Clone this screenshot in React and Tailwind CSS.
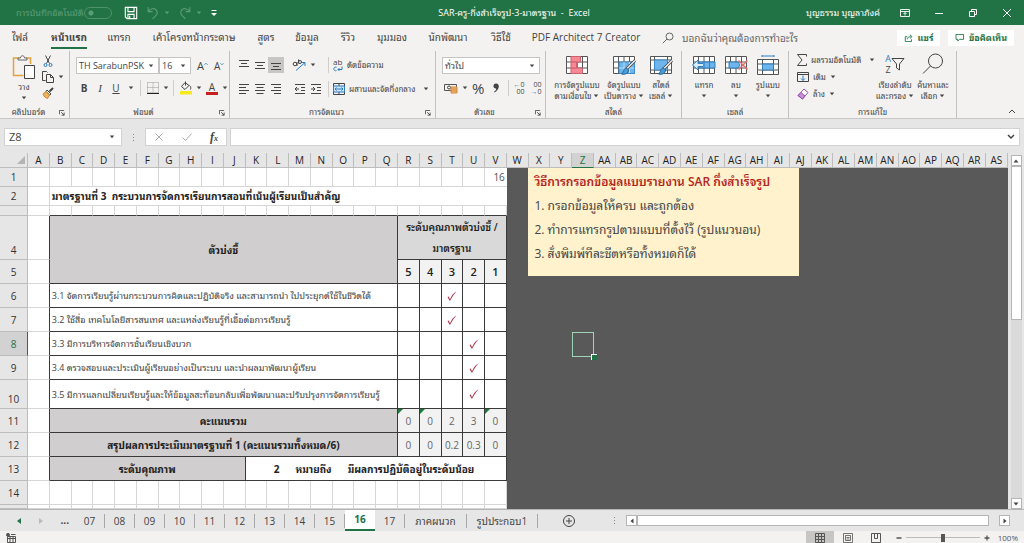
import React, { useState } from 'react';
import clsx from 'clsx';

const COLUMNS = [
  'A', 'B', 'C', 'D', 'E', 'F', 'G', 'H', 'I', 'J', 'K', 'L', 'M', 'N', 'O', 'P', 'Q', 'R', 'S', 'T', 'U', 'V', 'W',
  'X', 'Y', 'Z', 'AA', 'AB', 'AC', 'AD', 'AE', 'AF', 'AG', 'AH', 'AI', 'AJ', 'AK', 'AL', 'AM', 'AN', 'AO', 'AP',
  'AQ', 'AR', 'AS',
];

const MENU = [
  { label: 'ไฟล์', width: 'w-10' },
  { label: 'หน้าแรก', width: 'w-[58px]', active: true },
  { label: 'แทรก', width: 'w-[42px]' },
  { label: 'เค้าโครงหน้ากระดาษ', width: 'w-[108px]' },
  { label: 'สูตร', width: 'w-9' },
  { label: 'ข้อมูล', width: 'w-[46px]' },
  { label: 'รีวิว', width: 'w-9' },
  { label: 'มุมมอง', width: 'w-[52px]' },
  { label: 'นักพัฒนา', width: 'w-[60px]' },
  { label: 'วิธีใช้', width: 'w-[46px]' },
  { label: 'PDF Architect 7 Creator', width: 'w-[124px]' },
];

const INDICATORS = [
  { row: 6, text: '3.1 จัดการเรียนรู้ผ่านกระบวนการคิดและปฏิบัติจริง และสามารถนำ ไปประยุกต์ใช้ในชีวิตได้', score: 3 },
  { row: 7, text: '3.2 ใช้สื่อ เทคโนโลยีสารสนเทศ และแหล่งเรียนรู้ที่เอื้อต่อการเรียนรู้', score: 3 },
  { row: 8, text: '3.3 มีการบริหารจัดการชั้นเรียนเชิงบวก', score: 2 },
  { row: 9, text: '3.4 ตรวจสอบและประเมินผู้เรียนอย่างเป็นระบบ และนำผลมาพัฒนาผู้เรียน', score: 2 },
  { row: 10, text: '3.5 มีการแลกเปลี่ยนเรียนรู้และให้ข้อมูลสะท้อนกลับเพื่อพัฒนาและปรับปรุงการจัดการเรียนรู้', score: 2 },
];

const LEVELS = [5, 4, 3, 2, 1];

const SHEETS = ['07', '08', '09', '10', '11', '12', '13', '14', '15', '16', '17', 'ภาคผนวก', 'รูปประกอบ1'];

const Svg = ({ className, viewBox = '0 0 16 16', children }) => (
  <svg className={clsx('shrink-0', className)} viewBox={viewBox} fill="none" stroke="currentColor" aria-hidden="true">
    {children}
  </svg>
);

const Caret = ({ className }) => (
  <Svg className={clsx('h-1 w-1.5', className)} viewBox="0 0 6 4">
    <path d="M0.8 0.5h4.4L3 3.2z" fill="currentColor" stroke="none" />
  </Svg>
);

const Launcher = () => (
  <button type="button" aria-label="ตัวเลือกเพิ่มเติม" className="absolute right-1 bottom-0.5">
    <Svg className="h-1.5 w-1.5" viewBox="0 0 7 7">
      <path d="M0.5 5V0.5H6M2.5 2.5L6 6M6 3v3H3" />
    </Svg>
  </button>
);

const Group = ({ label, width, launcher, children }) => (
  <section className={clsx('relative flex shrink-0 flex-col border-r border-[#c3c1bf]', width)}>
    <div className="h-14">{children}</div>
    <div className={clsx('text-center text-[8px] leading-3', launcher && 'pr-3')}>{label}</div>
    {launcher && <Launcher />}
  </section>
);

// แถบชื่อเรื่อง
const TitleBar = () => (
  <header className="flex h-[25px] items-center bg-[#217346] text-white">
    <div className="flex flex-1 items-center pl-4">
      <label className="flex items-center gap-1 text-[9px] text-[#5c9c78]">
        <span className="w-16 whitespace-nowrap">การบันทึกอัตโนมัติ</span>
        <input
          type="checkbox"
          className="h-3 w-7 appearance-none rounded-full border border-[#4f926d] bg-[radial-gradient(circle_at_6px_5px,#5c9c78_2px,transparent_3px)]"
        />
      </label>
      <button type="button" aria-label="บันทึก" className="ml-3">
        <Svg className="h-3.5 w-3.5">
          <path d="M1.5 1.5h13v13h-11l-2-2zM4.5 1.5v5h7v-5M4.5 14.5v-5h7v5M6.5 11v3.5" strokeWidth="1.3" />
        </Svg>
      </button>
      <button type="button" aria-label="เลิกทำ" className="ml-2 flex items-center gap-1 text-[#5c9c78]">
        <Svg className="h-3.5 w-3.5">
          <path d="M2.5 1.5v5h5M2.5 6.5C5 2.5 10 2 12 5s1 5-4.5 9.5" strokeWidth="1.3" />
        </Svg>
        <Caret />
      </button>
      <button type="button" aria-label="ทำซ้ำ" className="ml-2 flex items-center gap-1 text-[#5c9c78]">
        <Svg className="h-3.5 w-3.5">
          <path d="M13.5 1.5v5h-5M13.5 6.5C11 2.5 6 2 4 5s-1 5 4.5 9.5" strokeWidth="1.3" />
        </Svg>
        <Caret />
      </button>
      <button type="button" aria-label="กำหนดแถบเครื่องมือเอง" className="ml-2">
        <Svg className="h-2 w-2" viewBox="0 0 8 8">
          <path d="M1.5 1.5h5" />
          <path d="M1 4h6L4 7z" fill="currentColor" stroke="none" />
        </Svg>
      </button>
    </div>
    <h1 className="text-[9px] whitespace-pre">SAR-ครู-กึ่งสำเร็จรูป-3-มาตรฐาน  -  Excel</h1>
    <div className="flex flex-1 items-center justify-end pr-3">
      <span className="mr-5 text-[9px]">บุญธรรม บุญลาภังค์</span>
      <button type="button" aria-label="ตัวเลือกการแสดง Ribbon" className="mr-6">
        <Svg className="h-2.5 w-2.5" viewBox="0 0 10 10">
          <path d="M0.5 1.5h9v7h-9zM0.5 3.5h9M5 7.5v-3M3.5 6L5 4.500 6.500 6" strokeWidth="0.9" />
        </Svg>
      </button>
      <button type="button" aria-label="ย่อหน้าต่าง" className="mr-6">
        <Svg className="h-2.5 w-2.5" viewBox="0 0 10 10"><path d="M1 5.5h8" /></Svg>
      </button>
      <button type="button" aria-label="คืนค่าหน้าต่าง" className="mr-6">
        <Svg className="h-2.5 w-2.5" viewBox="0 0 10 10">
          <path d="M1.5 3.5h5v5h-5zM3.5 3.5v-2h5v5h-2" />
        </Svg>
      </button>
      <button type="button" aria-label="ปิด">
        <Svg className="h-2.5 w-2.5" viewBox="0 0 10 10"><path d="M1 1l8 8M9 1L1 9" /></Svg>
      </button>
    </div>
  </header>
);

const MenuBar = () => (
  <nav className="flex h-[26px] items-center text-[10px]">
    {MENU.map((item) => (
      <button
        key={item.label}
        type="button"
        className={clsx('flex h-full shrink-0 items-center justify-center whitespace-nowrap', item.width, item.active && 'font-bold')}
      >
        <span className={clsx('flex h-[21px] items-center border-b-2', item.active ? 'border-[#217346]' : 'border-transparent')}>
          {item.label}
        </span>
      </button>
    ))}
    <button type="button" className="ml-3.5 flex items-center gap-2 whitespace-nowrap text-[#666]">
      <Svg className="h-3 w-3" viewBox="0 0 12 12">
        <circle cx="7.5" cy="4.5" r="3.5" />
        <path d="M5 7L0.8 11.2" />
      </Svg>
      บอกฉันว่าคุณต้องการทำอะไร
    </button>
    <div className="ml-auto flex gap-2 pr-2.5 text-[9px] font-bold text-[#217346]">
      <button type="button" className="flex h-4 w-[43px] items-center justify-center gap-1 bg-white whitespace-nowrap">
        <Svg className="h-2 w-2.5" viewBox="0 0 10 9">
          <path d="M3 3H0.8v5.500h7V6M3 6c0-2 1.500-3 4-3M6 0.800L8.500 3 6 5.200" />
        </Svg>
        แชร์
      </button>
      <button type="button" className="flex h-4 w-[66px] items-center justify-center gap-1 bg-white whitespace-nowrap">
        <Svg className="h-2 w-2.5" viewBox="0 0 10 9">
          <path d="M0.5 0.5h8.5v5.5H4.5L2.5 8V6h-2z" />
        </Svg>
        ข้อคิดเห็น
      </button>
    </div>
  </nav>
);

const Lines = ({ d, label, active }) => (
  <button type="button" aria-label={label} className={clsx('flex h-4 w-4 items-center justify-center', active && 'bg-[#c8c6c4]')}>
    <Svg className="h-3 w-3" viewBox="0 0 12 12"><path d={d} /></Svg>
  </button>
);

const BigButton = ({ icon, lines, className }) => (
  <button type="button" className={clsx('flex shrink-0 flex-col items-center whitespace-nowrap', className)}>
    {icon}
    <span className="mt-1 text-[8px] leading-[11px]">{lines[0]}</span>
    <span className="flex h-[11px] items-center gap-0.5 text-[8px] leading-[11px]">
      {lines[1]}
      <Caret />
    </span>
  </button>
);

const gridLines = 'M1.5 1.5h21v17h-21zM1.5 7h21M1.5 13h21M6.5 1.5v17M12 1.5v17M17.5 1.5v17';

const Brush = () => (
  <>
    <path d="M23 5.5l-8.500 8.500" stroke="#444" strokeWidth="3" />
    <path d="M23 5.5l-8.500 8.500" stroke="#eee" strokeWidth="1.5" />
    <path d="M14.5 13c-3 0-2.500 4-5 6 4 1 7-1 7-4z" fill="#4a9bd9" stroke="#27648f" />
  </>
);

const ConditionalIcon = () => (
  <Svg className="h-5 w-6" viewBox="0 0 24 20">
    <path d="M1.5 1.5h21v17h-21z" fill="#fff" stroke="none" />
    <path d={gridLines} stroke="#555" />
    <path d="M6 1.5h9.500V7H6zM6 13h11.500v5.500H6z" fill="#f58a96" stroke="#d0606c" />
    <path d="M6 7h5.500v6H6z" fill="#f58a96" stroke="#d0606c" />
    <path d="M12.5 8v4" stroke="#3c8ac8" />
  </Svg>
);

const FormatTableIcon = () => (
  <Svg className="h-5 w-6" viewBox="0 0 24 20">
    <path d="M1.5 1.5h21v17h-21z" fill="#fff" stroke="none" />
    <path d={gridLines} stroke="#555" />
    <path d="M7 7h15.500v11.500H7z" fill="#6db5ea" stroke="#3c8ac8" />
    <path d="M12 7v11M17.5 7v11M7 13h15" stroke="#b9dcf5" />
    <Brush />
  </Svg>
);

const CellStyleIcon = () => (
  <Svg className="h-5 w-6" viewBox="0 0 24 20">
    <path d="M1.5 1.5h21v17h-21z" fill="#fff" stroke="none" />
    <path d="M1.5 1.5h21v17h-21zM1.5 5h21M5.5 1.5v17M18.5 1.5v17M1.5 15h21" stroke="#555" />
    <path d="M5.5 5h13v10h-13z" fill="#6db5ea" stroke="#3c8ac8" />
    <Brush />
  </Svg>
);

const InsertIcon = () => (
  <Svg className="h-5 w-6" viewBox="0 0 24 20">
    <path d="M1.5 1.5h21v17h-21z" fill="#fff" stroke="none" />
    <path d={gridLines} stroke="#555" />
    <path d="M7 7h16v6H7z" fill="#6db5ea" stroke="#2f7fc0" />
    <path d="M12 7v6M17.5 7v6" stroke="#2f7fc0" />
    <path d="M11 8.5H6V5L0.5 10 6 15v-3.500h5" fill="#d8ecfa" stroke="#2f7fc0" />
  </Svg>
);

const DeleteIcon = () => (
  <Svg className="h-5 w-6" viewBox="0 0 24 20">
    <path d="M1.5 1.5h21v17h-21z" fill="#fff" stroke="none" />
    <path d={gridLines} stroke="#555" />
    <path d="M5 7h9l2 3-2 3H5z" fill="#6db5ea" stroke="#2f7fc0" />
    <path d="M14.5 5.5l9 9M23.5 5.5l-9 9" stroke="#e67070" strokeWidth="1.5" />
  </Svg>
);

const FormatIcon = () => (
  <Svg className="h-5 w-6" viewBox="0 0 24 20">
    <path d="M1.5 4.500h21v15h-21z" fill="#fff" stroke="none" />
    <path d="M1.5 4.5h21v15h-21zM1.5 9h21M1.5 15h21M6.5 4.5v15M17.5 4.5v15" stroke="#555" />
    <path d="M6.5 9h11v6h-11z" fill="#6db5ea" stroke="#2f7fc0" />
    <path d="M6 1h12M6 0v2M18 0v2" stroke="#2f7fc0" />
  </Svg>
);

const ClipboardGroup = () => (
  <Group label="คลิปบอร์ด" width="w-[70px]" launcher>
    <div className="flex gap-1.5 pt-1 pl-3">
      <button type="button" className="flex w-6 flex-col items-center text-[8px] leading-[11px]">
        <Svg className="h-6 w-6" viewBox="0 0 24 24">
          <path d="M7 3H1.5v17.5h10" stroke="#e3a23c" strokeWidth="1.5" />
          <path d="M14 3h4.5v6" stroke="#e3a23c" strokeWidth="1.5" />
          <path d="M6 5V3h2.5c0-3 4-3 4 0H15v2z" fill="#fff" stroke="#666" />
          <path d="M12.5 10.5h10v13h-10z" fill="#fff" stroke="#444" />
        </Svg>
        <span className="mt-0.5">วาง</span>
        <Caret className="mt-1" />
      </button>
      <div className="flex flex-col gap-1">
        <button type="button" aria-label="ตัด">
          <Svg className="h-3 w-3" viewBox="0 0 12 12">
            <path d="M3.5 0.5l4 8M8.5 0.5l-4 8" stroke="#444" />
            <circle cx="3.5" cy="10" r="1.5" stroke="#2b7cc0" />
            <circle cx="8.5" cy="10" r="1.5" stroke="#2b7cc0" />
          </Svg>
        </button>
        <button type="button" aria-label="คัดลอก" className="flex items-center gap-1">
          <Svg className="h-3 w-3" viewBox="0 0 12 12">
            <path d="M3.5 9.5h-3v-9h4l1 1" />
            <path d="M4.5 3.5h4l3 3v5h-7zM8.5 3.5v3h3" />
          </Svg>
          <Caret />
        </button>
        <button type="button" aria-label="ตัวคัดวางรูปแบบ">
          <Svg className="h-3 w-3" viewBox="0 0 12 12">
            <path d="M11 1L7.5 4.5" strokeWidth="2" />
            <path d="M5 3l4 4-1.5 1L4 4.5z" fill="#fff" />
            <path d="M4 4.5L1 7c1 3 3 4 4.5 4.5l2-3.5z" fill="#efb45e" stroke="#c98a2c" />
          </Svg>
        </button>
      </div>
    </div>
  </Group>
);

const Select = ({ label, value, className }) => (
  <label className={clsx('relative flex h-[17px] items-center border border-[#c6c4c2] bg-white', className)}>
    <select aria-label={label} defaultValue={value} className="w-full appearance-none bg-transparent pl-0.5 text-[9px] leading-[15px] outline-none">
      <option>{value}</option>
    </select>
    <Caret className="pointer-events-none absolute right-1" />
  </label>
);

const FontGroup = () => (
  <Group label="ฟอนต์" width="w-40" launcher>
    <div className="flex items-center pt-1.5 pl-1.5">
      <Select label="ฟอนต์" value="TH SarabunPSK" className="w-[83px]" />
      <Select label="ขนาดฟอนต์" value="16" className="w-8" />
      <button type="button" className="ml-1.5 flex text-[11px] leading-4">
        A
        <Svg className="mt-1 h-1 w-1" viewBox="0 0 5 4"><path d="M0.5 3l2-2 2 2" stroke="#2b7cc0" /></Svg>
      </button>
      <button type="button" className="ml-1.5 flex text-[10px] leading-4">
        A
        <Svg className="mt-1 h-1 w-1" viewBox="0 0 5 4"><path d="M0.5 1l2 2 2-2" stroke="#2b7cc0" /></Svg>
      </button>
    </div>
    <div className="mt-1.5 flex h-4 items-center pl-2.5 text-[10px]">
      <button type="button" className="w-2 font-bold">B</button>
      <button type="button" className="ml-2 w-2 font-['Liberation_Serif',serif] text-[11px] italic">I</button>
      <button type="button" className="ml-2 w-2 underline">U</button>
      <Caret className="ml-2" />
      <span className="ml-1.5 h-4 border-l border-[#d0cecc]" />
      <button type="button" aria-label="เส้นขอบ" className="ml-1.5 flex items-center gap-1">
        <Svg className="h-3 w-3" viewBox="0 0 12 12">
          <path d="M0.5 0.5h11v10h-11zM6 0.5v10M0.5 5.5h11" stroke="#999" strokeDasharray="1 1" />
          <path d="M0 11.5h12" stroke="#222" />
        </Svg>
        <Caret />
      </button>
      <span className="ml-1 h-4 border-l border-[#d0cecc]" />
      <button type="button" aria-label="สีเติม" className="ml-1.5 flex items-center gap-1">
        <Svg className="h-3.5 w-3" viewBox="0 0 12 14">
          <path d="M5 1.5L1.500 5.500l3.500 3 4-4zM5.500 0.500v4M9.500 4.500c1.500 1 1.500 2.500 1 4" />
          <path d="M0 10h12v3.500H0z" fill="#f4ea1c" stroke="none" />
        </Svg>
        <Caret />
      </button>
      <button type="button" aria-label="สีฟอนต์" className="ml-1 flex items-center gap-1">
        <span className="flex h-3.5 w-3 items-center justify-center border-b-[3px] border-[#c8201e] leading-none">A</span>
        <Caret />
      </button>
    </div>
  </Group>
);

const AlignmentGroup = () => (
  <Group label="การจัดแนว" width="w-[206px]" launcher>
    <div className="mt-1.5 flex h-4 items-center pl-1.5">
      <Lines label="จัดชิดด้านบน" d="M1 1.5h10M3 4.5h6M1 7.5h10" />
      <Lines label="จัดกึ่งกลางแนวตั้ง" d="M1 3.5h10M3 6.5h6M1 9.5h10" />
      <Lines label="จัดชิดด้านล่าง" d="M1 4.5h10M3 7.5h6M1 10.5h10" active />
      <button type="button" aria-label="การวางแนว" className="ml-2 flex items-center gap-1">
        <Svg className="h-3 w-3.5" viewBox="0 0 14 12">
          <path d="M4 11.5l9-8M9.5 3.5H13V7" stroke="#2b7cc0" />
          <circle cx="3" cy="5" r="1.8" />
          <path d="M5 3v4M6.5 0.5v4" />
          <circle cx="8" cy="3" r="1.5" />
        </Svg>
        <Caret />
      </button>
      <span className="ml-3 h-4 border-l border-[#d0cecc]" />
      <button type="button" className="ml-1 flex items-center gap-1 text-[8px] whitespace-nowrap">
        <span className="flex flex-col items-start">
          <span className="text-[8px] leading-[8px]">ab</span>
          <Svg className="h-1.5 w-2.5 text-[#2b7cc0]" viewBox="0 0 10 6">
            <path d="M3.5 1.200C0 0 0 6 3.500 4.500M9 0.500v3H5M6.500 2L5 3.500 6.500 5" />
          </Svg>
        </span>
        ตัดข้อความ
      </button>
    </div>
    <div className="mt-2 flex h-4 items-center pl-1.5">
      <Lines label="จัดชิดซ้าย" d="M1 1.5h10M1 4.5h7M1 7.5h10M1 10.5h7" />
      <Lines label="จัดกึ่งกลาง" d="M1 1.5h10M2.5 4.5h7M1 7.5h10M2.5 10.5h7" />
      <Lines label="จัดชิดขวา" d="M1 1.5h10M4 4.5h7M1 7.5h10M4 10.5h7" />
      <span className="w-2" />
      <Lines label="ลดการเยื้อง" d="M1 1.5h10M7 4.5h4M7 7.5h4M1 10.5h10M1 6h4M3 4L1 6l2 2" />
      <Lines label="เพิ่มการเยื้อง" d="M1 1.5h10M7 4.5h4M7 7.5h4M1 10.5h10M1 6h4M3 4l2 2-2 2" />
      <span className="ml-1 h-4 border-l border-[#d0cecc]" />
      <button type="button" className="ml-1 flex items-center gap-1 text-[8px] whitespace-nowrap">
        <Svg className="h-3 w-3" viewBox="0 0 12 12">
          <path d="M0.5 0.5h11v11h-11zM6 0.5v2.5M6 9v2.5" />
          <path d="M0.5 3h11v6h-11z" fill="#cfe6f7" stroke="#2b7cc0" />
          <path d="M2 6h8M3.5 4.5L2 6l1.500 1.500M8.500 4.500L10 6 8.500 7.500" stroke="#2b7cc0" />
        </Svg>
        <span className="w-[68px] text-left">ผสานและจัดกึ่งกลาง</span>
        <Caret className="ml-0.5" />
      </button>
    </div>
  </Group>
);

const NumberGroup = () => (
  <Group label="ตัวเลข" width="w-[110px]" launcher>
    <div className="px-1.5 pt-1.5">
      <Select label="รูปแบบตัวเลข" value="ทั่วไป" className="w-[98px]" />
    </div>
    <div className="mt-1.5 flex h-4 items-center pl-2">
      <button type="button" aria-label="รูปแบบบัญชี" className="flex items-center gap-1">
        <Svg className="h-3 w-3.5" viewBox="0 0 14 12">
          <path d="M0.5 2.5h12v6h-12z" stroke="#555" />
          <circle cx="5" cy="5.5" r="1.5" />
          <path d="M7 5h6v6H7zM7 7h6M7 9h6" fill="#f3b878" stroke="#d48a3c" />
        </Svg>
        <Caret />
      </button>
      <button type="button" className="ml-1 text-[15px] leading-4">%</button>
      <button type="button" aria-label="รูปแบบจุลภาค" className="ml-2">
        <Svg className="h-2.5 w-2" viewBox="0 0 8 10">
          <path d="M4 0.5c4 0 4 6-1.5 9l-0.5-0.8C4 7.5 4.5 6.5 4 5.5 0.5 5.5 0.8 0.5 4 0.5z" fill="currentColor" stroke="none" />
        </Svg>
      </button>
      <span className="ml-2 h-4 border-l border-[#d0cecc]" />
      <button type="button" className="ml-1 flex flex-col text-right text-[7px] leading-[7px]">
        <span><span className="text-[#2b7cc0]">←</span>0</span>
        <span>00</span>
      </button>
      <button type="button" className="ml-1.5 flex flex-col text-right text-[7px] leading-[7px]">
        <span>00</span>
        <span><span className="text-[#2b7cc0]">→</span>0</span>
      </button>
    </div>
  </Group>
);

const EditingGroup = () => (
  <Group label="การแก้ไข" width="w-[168px]">
    <div className="flex pl-2">
      <div className="flex w-[78px] flex-col text-[8px] whitespace-nowrap">
        <button type="button" className="flex h-[17px] items-center gap-1">
          <Svg className="h-3 w-2.5" viewBox="0 0 10 12"><path d="M9.5 2.5v-2h-9L5 6l-4.500 5.500h9v-2" /></Svg>
          <span className="w-[50px] text-left">ผลรวมอัตโนมัติ</span>
          <Caret className="ml-1" />
        </button>
        <button type="button" className="flex h-[17px] items-center gap-1">
          <Svg className="h-2.5 w-3" viewBox="0 0 12 10">
            <path d="M0.5 0.5h11v9h-11zM0.5 2.5h11" />
            <path d="M6 3.5v5M4 6.5l2 2 2-2" stroke="#2b7cc0" />
          </Svg>
          เติม
          <Caret />
        </button>
        <button type="button" className="flex h-[17px] items-center gap-1">
          <Svg className="h-3 w-3" viewBox="0 0 12 12">
            <path d="M7 1l4 3.5-5.500 6.500L1 7.500z" fill="#fff" stroke="#9a4fb0" />
            <path d="M4 4.5L8 8l-2.500 3L1 7.500z" fill="#c88fd6" stroke="#9a4fb0" />
          </Svg>
          ล้าง
          <Caret />
        </button>
      </div>
      <BigButton
        className="w-10 pt-0.5"
        lines={['เรียงลำดับ', 'และกรอง']}
        icon={
          <span className="flex h-[22px] items-center">
            <span className="flex flex-col text-[9px] leading-[11px]">
              <span className="text-[#2b7cc0]">A</span>
              <span>Z</span>
            </span>
            <Svg className="h-3.5 w-3.5" viewBox="0 0 14 14"><path d="M1 1.5h12L8.500 7v6l-3-2V7z" /></Svg>
          </span>
        }
      />
      <BigButton
        className="w-9 pt-0.5"
        lines={['ค้นหาและ', 'เลือก']}
        icon={
          <Svg className="h-[22px] w-[22px]" viewBox="0 0 22 22">
            <circle cx="13.5" cy="8" r="7" />
            <path d="M8.5 13L1 20.5" />
          </Svg>
        }
      />
    </div>
  </Group>
);

const Ribbon = () => (
  <div className="flex h-[68px] border-b border-[#c9c7c5]">
    <ClipboardGroup />
    <FontGroup />
    <AlignmentGroup />
    <NumberGroup />
    <Group label="สไตล์" width="w-[136px]">
      <div className="flex pt-1 pl-1.5">
        <BigButton className="w-[50px]" icon={<ConditionalIcon />} lines={['การจัดรูปแบบ', 'ตามเงื่อนไข']} />
        <BigButton className="w-11" icon={<FormatTableIcon />} lines={['จัดรูปแบบ', 'เป็นตาราง']} />
        <BigButton className="w-[30px]" icon={<CellStyleIcon />} lines={['สไตล์', 'เซลล์']} />
      </div>
    </Group>
    <Group label="เซลล์" width="w-[107px]">
      <div className="flex pt-1 pl-1.5">
        <BigButton className="w-8" icon={<InsertIcon />} lines={['แทรก', '']} />
        <BigButton className="w-8" icon={<DeleteIcon />} lines={['ลบ', '']} />
        <BigButton className="w-8" icon={<FormatIcon />} lines={['รูปแบบ', '']} />
      </div>
    </Group>
    <EditingGroup />
    <button type="button" aria-label="ยุบ Ribbon" className="mt-auto mr-2 mb-1 ml-auto">
      <Svg className="h-1.5 w-2" viewBox="0 0 8 6"><path d="M1 5l3-3 3 3" /></Svg>
    </button>
  </div>
);

const FormulaBar = () => (
  <div className="flex h-[34px] items-center bg-[#e6e6e6] pt-0.5 pr-1 pl-1">
    <div className="flex h-[18px] w-[118px] shrink-0 items-center border border-[#d2d2d2] bg-white pr-1.5">
      <input aria-label="กล่องชื่อ" defaultValue="Z8" className="w-full min-w-0 pl-1 text-[11px] leading-4 outline-none" />
      <Caret />
    </div>
    <span className="flex w-[23px] shrink-0 flex-col items-center gap-0.5">
      {[0, 1, 2].map((i) => <span key={i} className="h-px w-px bg-[#888]" />)}
    </span>
    <div className="flex h-[18px] w-[82px] shrink-0 items-center justify-between border border-[#d2d2d2] bg-white px-2">
      <button type="button" aria-label="ยกเลิก">
        <Svg className="h-2.5 w-2.5 text-[#aaa]" viewBox="0 0 10 10"><path d="M1.5 1.5l7 7M8.5 1.5l-7 7" /></Svg>
      </button>
      <button type="button" aria-label="ป้อน">
        <Svg className="h-2.5 w-2.5 text-[#aaa]" viewBox="0 0 10 10"><path d="M0.5 5.5L3.500 8.500l6-7" /></Svg>
      </button>
      <button type="button" className="font-['Liberation_Serif',serif] text-[12px] leading-none font-bold italic">
        f<span className="text-[8px]">x</span>
      </button>
    </div>
    <div className="ml-[3px] flex h-[18px] flex-1 items-center border border-[#d2d2d2] bg-white pr-1">
      <input aria-label="แถบสูตร" className="w-full min-w-0 px-1 text-[10px] outline-none" />
      <Svg className="h-1.5 w-2" viewBox="0 0 8 6"><path d="M1 1l3 3 3-3" strokeWidth="1.5" /></Svg>
    </div>
  </div>
);

const RowHead = ({ n, className }) => (
  <th
    scope="row"
    className={clsx(
      'overflow-hidden border-r border-b border-[#bdbdbd] p-0 text-center text-[10px] leading-none font-normal',
      n === 8 ? 'border-r-[#217346] bg-[#d2d2d2] text-[#217346]' : 'bg-[#e6e6e6] text-[#333]',
      className,
    )}
  >
    {n}
  </th>
);

const Blank = ({ dark }) => (
  <td className={clsx('border-r border-b border-b-[#d6d6d6] p-0', dark ? 'border-r-[#3a3a3a]' : 'border-r-[#d6d6d6]')} />
);

// เซลล์ว่างตั้งแต่ B ถึงคอลัมน์สุดท้ายที่กำหนด
const Blanks = ({ count, strong }) => (
  Array.from({ length: count }, (_, i) => (
    <td key={i} className={clsx('border-r border-b border-r-[#d6d6d6] p-0', strong ? 'border-b-[#3a3a3a]' : 'border-b-[#d6d6d6]')} />
  ))
);

const box = 'border-r border-b border-[#3a3a3a] p-0 leading-none whitespace-nowrap';
const heading = 'bg-[#d0cece] text-center text-[10px] font-bold';

const Tick = () => (
  <Svg className="mx-auto h-2.5 w-2.5 text-[#a8324a]" viewBox="0 0 10 10">
    <path d="M0.5 6l1.200-0.500L3 8.200C4.500 4.500 6.500 2 9.500 0.500 7 3 5 6 3.300 9.500H2.500z" fill="currentColor" stroke="none" />
  </Svg>
);

const ScoreCell = ({ value, flag }) => (
  <td className={clsx(box, 'relative bg-[#f2f2f2] text-center text-[10px] text-[#666]')}>
    {flag && <span className="absolute top-0 left-0 border-t-[5px] border-r-[5px] border-t-[#1e7a3c] border-r-transparent" />}
    {value}
  </td>
);

const Note = () => (
  <aside className="absolute top-0 left-[4.3%] h-[108px] w-[54%] bg-[#fff2cc] px-1.5 pt-0.5 text-left text-[12px] leading-6 whitespace-nowrap text-[#444]">
    <h2 className="font-semibold text-[#b3261e]">วิธีการกรอกข้อมูลแบบรายงาน SAR กึ่งสำเร็จรูป</h2>
    <p>1. กรอกข้อมูลให้ครบ และถูกต้อง</p>
    <p>2. ทำการแทรกรูปตามแบบที่ตั้งไว้ (รูปแนวนอน)</p>
    <p>3. สั่งพิมพ์ทีละชีตหรือทั้งหมดก็ได้</p>
  </aside>
);

const Grid = () => (
  <table className="w-full flex-1 table-fixed border-separate border-spacing-0 bg-white text-[#222]">
    <colgroup>
      <col className="w-7" />
      {COLUMNS.map((c) => <col key={c} />)}
    </colgroup>
    <thead>
      <tr className="h-[15px]">
        <th className="border-r border-b border-[#bdbdbd] bg-[#e6e6e6] p-0">
          <Svg className="mr-0.5 ml-auto h-2 w-2" viewBox="0 0 8 8"><path d="M8 0v8H0z" fill="#b4b4b4" stroke="none" /></Svg>
        </th>
        {COLUMNS.map((c) => (
          <th
            key={c}
            scope="col"
            className={clsx(
              'border-r border-b border-[#bdbdbd] p-0 text-[10px] leading-[13px] font-normal',
              c === 'Z' ? 'border-b-[#217346] bg-[#d2d2d2] text-[#217346]' : 'bg-[#e6e6e6]',
            )}
          >
            {c}
          </th>
        ))}
      </tr>
    </thead>
    <tbody>
      <tr className="h-[19px]">
        <RowHead n={1} />
        <Blank />
        <Blanks count={20} />
        <td className="border-b border-[#d6d6d6] p-0 pr-0.5 text-right text-[10px] leading-none text-[#555]">16</td>
        <td colSpan={23} rowSpan={15} className="relative bg-[#595959] p-0">
          <Note />
          <span className="absolute top-[164px] left-[13%] h-[25px] w-[4.4%] border border-[#9fd5b7]">
            <span className="absolute -right-1 -bottom-1 h-1.5 w-1.5 border-t border-l border-white bg-[#217346]" />
          </span>
        </td>
      </tr>
      <tr className="h-[19px]">
        <RowHead n={2} />
        <Blank />
        <td colSpan={21} className="border-b border-[#d6d6d6] p-0 pl-0.5 text-[10px] leading-none font-bold whitespace-pre">
          {'มาตรฐานที่ 3  กระบวนการจัดการเรียนการสอนที่เน้นผู้เรียนเป็นสำคัญ'}
        </td>
      </tr>
      <tr className="h-2.5">
        <RowHead n="" />
        <Blank />
        <Blanks count={21} strong />
      </tr>
      <tr className="h-11">
        <RowHead n={4} className="pb-1 align-bottom" />
        <Blank dark />
        <td colSpan={16} rowSpan={2} className={clsx(box, heading)}>ตัวบ่งชี้</td>
        <td colSpan={5} className={clsx(box, 'bg-[#d9d9d9] text-center text-[10px] font-semibold')}>
          <div className="leading-[21px]">ระดับคุณภาพตัวบ่งชี้ /</div>
          <div className="leading-[21px]">มาตรฐาน</div>
        </td>
      </tr>
      <tr className="h-6">
        <RowHead n={5} />
        <Blank dark />
        {LEVELS.map((l) => <td key={l} className={clsx(box, 'bg-[#f2f2f2] text-center text-[11px] font-semibold')}>{l}</td>)}
      </tr>
      {INDICATORS.map((item) => (
        <tr key={item.row} className={item.row === 10 ? 'h-[29px]' : 'h-6'}>
          <RowHead n={item.row} className={item.row === 10 ? 'pb-1 align-bottom' : ''} />
          <Blank dark />
          <td colSpan={16} className={clsx(box, 'pl-0.5 text-[9px] text-[#444]')}>{item.text}</td>
          {LEVELS.map((l) => <td key={l} className={box}>{l === item.score && <Tick />}</td>)}
        </tr>
      ))}
      <tr className="h-6">
        <RowHead n={11} />
        <Blank dark />
        <td colSpan={16} className={clsx(box, heading)}>คะแนนรวม</td>
        <ScoreCell value="0" flag />
        <ScoreCell value="0" flag />
        <ScoreCell value="2" />
        <ScoreCell value="3" />
        <ScoreCell value="0" flag />
      </tr>
      <tr className="h-6">
        <RowHead n={12} />
        <Blank dark />
        <td colSpan={16} className={clsx(box, heading)}>สรุปผลการประเมินมาตรฐานที่ 1 (คะแนนรวมทั้งหมด/6)</td>
        {['0', '0', '0.2', '0.3', '0'].map((v, i) => <ScoreCell key={i} value={v} />)}
      </tr>
      <tr className="h-6">
        <RowHead n={13} />
        <Blank dark />
        <td colSpan={9} className={clsx(box, heading)}>ระดับคุณภาพ</td>
        <td colSpan={12} className={clsx(box, 'text-[10px] font-bold')}>
          <div className="flex gap-4 pl-7">
            <span>2</span>
            <span>หมายถึง</span>
            <span>มีผลการปฏิบัติอยู่ในระดับน้อย</span>
          </div>
        </td>
      </tr>
      <tr className="h-6">
        <RowHead n={14} />
        <Blank />
        <Blanks count={21} />
      </tr>
      <tr className="h-1">
        <RowHead n="" />
        <Blank />
        <Blanks count={21} />
      </tr>
    </tbody>
  </table>
);

const ScrollButton = ({ label, d, className }) => (
  <button type="button" aria-label={label} className={clsx('flex shrink-0 items-center justify-center border border-[#b5b5b5] bg-white', className)}>
    <Svg className="h-1.5 w-1.5" viewBox="0 0 6 6"><path d={d} fill="currentColor" stroke="none" /></Svg>
  </button>
);

const SheetTabs = () => {
  const [current, setCurrent] = useState('16');

  return (
    <div className="flex h-[22px] items-center border-t border-[#b5b5b5] bg-[#e6e6e6] text-[10px]">
      <div className="flex w-[75px] shrink-0 items-center justify-end gap-4 pr-1.5">
        <button type="button" aria-label="แผ่นงานก่อนหน้า" className="text-[#217346]">
          <Svg className="h-1.5 w-1.5" viewBox="0 0 6 6"><path d="M5 0v6L1 3z" fill="currentColor" stroke="none" /></Svg>
        </button>
        <button type="button" aria-label="แผ่นงานถัดไป" className="text-[#bbb]">
          <Svg className="h-1.5 w-1.5" viewBox="0 0 6 6"><path d="M1 0v6l4-3z" fill="currentColor" stroke="none" /></Svg>
        </button>
        <button type="button" className="font-bold">...</button>
      </div>
      {SHEETS.map((name) => (
        <button
          key={name}
          type="button"
          onClick={() => setCurrent(name)}
          className={clsx(
            'shrink-0 whitespace-nowrap',
            name.length > 2 ? (name.length > 8 ? 'w-[71px]' : 'w-[62px]') : 'w-[30px]',
            name === current ? 'h-full border-b-2 border-[#217346] bg-white font-bold text-[#217346]' : 'h-3.5 border-r border-[#a8a8a8] leading-3.5',
          )}
        >
          {name}
        </button>
      ))}
      <button type="button" aria-label="แผ่นงานใหม่" className="ml-[25px]">
        <Svg className="h-3 w-3" viewBox="0 0 12 12">
          <circle cx="6" cy="6" r="5.5" />
          <path d="M6 3v6M3 6h6" />
        </Svg>
      </button>
      <span className="ml-auto flex w-6 flex-col items-center gap-0.5">
        {[0, 1, 2].map((i) => <span key={i} className="h-px w-px bg-[#888]" />)}
      </span>
      <div className="mr-3.5 flex h-[11px] w-3/8 shrink-0">
        <ScrollButton label="เลื่อนซ้าย" d="M4.5 0.5v5L1.500 3z" className="w-[11px]" />
        <span className="mr-2.5 flex-1 border border-[#b5b5b5] bg-white" />
        <ScrollButton label="เลื่อนขวา" d="M1.5 0.5v5L4.500 3z" className="w-[11px]" />
      </div>
    </div>
  );
};

const StatusBar = () => (
  <footer className="flex h-[13px] items-center bg-[#f3f2f1] pr-1.5 pl-1.5 text-[#555]">
    <button type="button" aria-label="บันทึกแมโคร">
      <Svg className="h-2.5 w-2.5" viewBox="0 0 10 10">
        <path d="M1.5 3.5h8v6h-8zM1.5 5.5h8M4 3.5v6M7 3.5v6M5 1.5h4.5" />
        <circle cx="2" cy="1.8" r="1.5" fill="currentColor" />
      </Svg>
    </button>
    <button type="button" aria-label="ปกติ" className="ml-auto flex h-full w-7 items-center justify-center bg-[#c8c6c4]">
      <Svg className="h-2.5 w-2.5" viewBox="0 0 10 10"><path d="M0.5 0.5h9v9h-9zM0.5 3.5h9M0.5 6.5h9M3.5 0.5v9M6.5 0.5v9" /></Svg>
    </button>
    <button type="button" aria-label="เค้าโครงหน้ากระดาษ" className="flex w-7 justify-center">
      <Svg className="h-2.5 w-2.5" viewBox="0 0 10 10"><path d="M0.5 0.5h9v9h-9zM2.5 2.5h5v5h-5zM3.5 4.5h3M3.5 6h3" strokeWidth="0.8" /></Svg>
    </button>
    <button type="button" aria-label="แสดงตัวอย่างตัวแบ่งหน้า" className="flex w-7 justify-center">
      <Svg className="h-2.5 w-2.5" viewBox="0 0 10 10"><path d="M0.5 0.5h9v9h-9zM3.5 0.5v5h3v-5" /></Svg>
    </button>
    <button type="button" aria-label="ย่อ" className="ml-1.5">
      <Svg className="h-1.5 w-1.5" viewBox="0 0 6 6"><path d="M0.5 3h5" strokeWidth="1.5" /></Svg>
    </button>
    <input
      type="range"
      aria-label="ย่อ/ขยาย"
      min="0"
      max="100"
      defaultValue="50"
      className="mx-1 h-2.5 w-[74px] appearance-none bg-[linear-gradient(#bbb,#bbb)] bg-[length:100%_1px] bg-center bg-no-repeat [&::-webkit-slider-thumb]:h-2 [&::-webkit-slider-thumb]:w-1 [&::-webkit-slider-thumb]:appearance-none [&::-webkit-slider-thumb]:bg-[#555]"
    />
    <button type="button" aria-label="ขยาย">
      <Svg className="h-1.5 w-1.5" viewBox="0 0 6 6"><path d="M0.5 3h5M3 0.5v5" strokeWidth="1.3" /></Svg>
    </button>
    <span className="ml-2 text-[8px] leading-3">100%</span>
  </footer>
);

const App = () => (
  <div className="flex min-h-screen flex-col overflow-hidden bg-[#f3f2f1] font-['Open_Sans','Noto_Sans_Thai_Looped','Noto_Sans_Thai','Noto_Sans',sans-serif] text-[#444]">
    <TitleBar />
    <MenuBar />
    <Ribbon />
    <FormulaBar />
    <main className="flex flex-1 bg-[#e6e6e6]">
      <Grid />
      <div className="flex w-4 shrink-0 flex-col items-center pt-0.5">
        <ScrollButton label="เลื่อนขึ้น" d="M0.5 4.5h5L3 1.500z" className="h-[11px] w-[11px]" />
        <span className="h-[154px] w-[11px] border border-[#b5b5b5] bg-white" />
        <span className="w-[11px] flex-1 bg-[#dadada]" />
        <ScrollButton label="เลื่อนลง" d="M0.5 1.5h5L3 4.500z" className="h-[11px] w-[11px]" />
      </div>
    </main>
    <SheetTabs />
    <StatusBar />
  </div>
);

export default App;
